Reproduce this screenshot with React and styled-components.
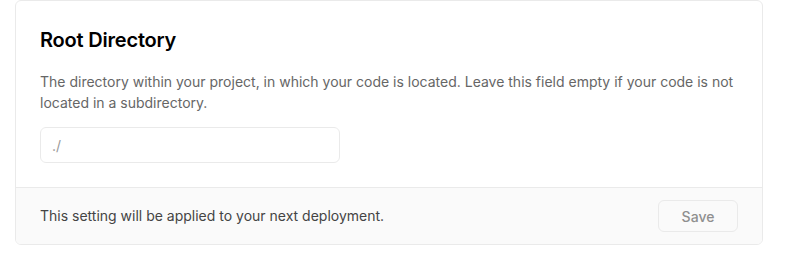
import React from 'react';
import { styled, createGlobalStyle } from 'styled-components';

const Global = createGlobalStyle`
  body {
    margin: 0;
    background: #fff;
    font-family: Inter, "Noto Sans", sans-serif;
    -webkit-font-smoothing: antialiased;
  }
`;

const Page = styled.div`
  padding: 0 31px 0 15px;
`;

const Card = styled.section`
  border: 1px solid #eaeaea;
  border-radius: 6px;
  background: #fff;
  overflow: hidden;
`;

const Body = styled.div`
  padding: 23px 24px 24px;
`;

const Title = styled.h2`
  margin: 0;
  font-size: 20px;
  line-height: 32px;
  font-weight: 600;
  color: #000;
  letter-spacing: -0.2px;
`;

const Description = styled.p`
  margin: 15px 0 14px;
  font-size: 14px;
  line-height: 21px;
  color: #666;
`;

const Input = styled.input`
  box-sizing: border-box;
  width: 300px;
  height: 36px;
  padding: 0 11px;
  border: 1px solid #eaeaea;
  border-radius: 6px;
  font-family: inherit;
  font-size: 14px;
  color: #000;
  outline: none;
  &::placeholder {
    color: #999;
  }
`;

const Footer = styled.div`
  display: flex;
  align-items: center;
  justify-content: space-between;
  padding: 12px 24px;
  background: #fafafa;
  border-top: 1px solid #eaeaea;
`;

const Note = styled.p`
  margin: 0;
  font-size: 14px;
  line-height: 20px;
  color: #444;
`;

const Button = styled.button`
  width: 80px;
  height: 32px;
  border: 1px solid #eaeaea;
  border-radius: 6px;
  background: #fafafa;
  color: #8f8f8f;
  font-family: inherit;
  font-size: 14px;
  font-weight: 500;
  cursor: not-allowed;
`;

export default function App() {
  return (
    <Page>
      <Global />
      <Card>
        <Body>
          <Title>Root Directory</Title>
          <Description>
            The directory within your project, in which your code is located. Leave this field empty if your code is not located in a subdirectory.
          </Description>
          <Input placeholder="./" />
        </Body>
        <Footer>
          <Note>This setting will be applied to your next deployment.</Note>
          <Button disabled>Save</Button>
        </Footer>
      </Card>
    </Page>
  );
}
